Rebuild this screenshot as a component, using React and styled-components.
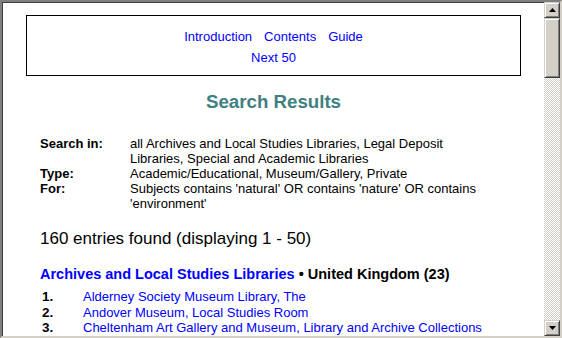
import React from "react";
import styled, { createGlobalStyle } from "styled-components";

const Global = createGlobalStyle`
  html, body { margin: 0; padding: 0; background: #fff; }
  body { font-family: "Liberation Sans", Arial, sans-serif; }
  * { box-sizing: border-box; }
`;

const Frame = styled.div`
  width: 562px;
  height: 338px;
  display: flex;
  border-top: 2px solid #808080;
  border-left: 2px solid #808080;
  border-right: 2px solid #d4d0c8;
  border-bottom: 2px solid #d4d0c8;
  box-shadow: inset 1px 1px 0 #404040;
  overflow: hidden;
  background: #fff;
`;

const Page = styled.div`
  flex: 1;
  overflow: hidden;
  padding: 13px 23px 0 24px;
  color: #000;
`;

const NavBox = styled.div`
  border: 1px solid #000;
  padding: 10px 0 7px;
  text-align: center;
  font-size: 13px;
  line-height: 21px;
`;

const NavRow = styled.div`
  display: flex;
  justify-content: center;
  gap: 12px;
`;

const Link = styled.a`
  color: #0000ff;
  text-decoration: none;
  cursor: pointer;
`;

const Title = styled.h1`
  margin: 15px 0 0;
  text-align: center;
  color: #408080;
  font-size: 18.7px;
  line-height: 22px;
  font-weight: bold;
`;

const Criteria = styled.div`
  margin: 23px 0 0 14px;
  display: grid;
  grid-template-columns: 90px 360px;
  font-size: 13px;
  line-height: 15px;
`;

const Label = styled.div`
  font-weight: bold;
`;

const Found = styled.div`
  margin: 18px 0 0 14px;
  font-size: 17px;
  line-height: 19px;
`;

const Section = styled.div`
  margin: 18px 0 0 14px;
  font-size: 14.5px;
  line-height: 17px;
  font-weight: bold;
`;

const SectionLink = styled(Link)`
  font-weight: bold;
`;

const List = styled.div`
  margin: 6px 0 0 16px;
  display: grid;
  grid-template-columns: 41px auto;
  font-size: 13px;
  line-height: 15.5px;
`;

const Num = styled.div`
  font-weight: bold;
  font-size: 13.5px;
`;

const Scrollbar = styled.div`
  width: 16px;
  display: flex;
  flex-direction: column;
  background-color: #fff;
  background-image: repeating-conic-gradient(#d4d0c8 0 25%, #fff 0 50%);
  background-size: 2px 2px;
`;

const Btn = styled.div`
  width: 16px;
  height: ${(p) => p.$h}px;
  flex: none;
  background: #d4d0c8;
  border-top: 1px solid #d4d0c8;
  border-left: 1px solid #d4d0c8;
  border-right: 1px solid #404040;
  border-bottom: 1px solid #404040;
  box-shadow: inset 1px 1px 0 #fff, inset -1px -1px 0 #808080;
  display: flex;
  align-items: center;
  justify-content: center;
`;

const Track = styled.div`
  flex: 1;
`;

const Arrow = ({ down }) => (
  <svg width="7" height="4" viewBox="0 0 7 4">
    <path d={down ? "M0 0h7L3.5 4z" : "M3.5 0L7 4H0z"} fill="#000" />
  </svg>
);

const items = [
  "Alderney Society Museum Library, The",
  "Andover Museum, Local Studies Room",
  "Cheltenham Art Gallery and Museum, Library and Archive Collections",
];

export default function App() {
  return (
    <>
      <Global />
      <Frame>
        <Page>
          <NavBox>
            <NavRow>
              <Link>Introduction</Link>
              <Link>Contents</Link>
              <Link>Guide</Link>
            </NavRow>
            <NavRow>
              <Link>Next 50</Link>
            </NavRow>
          </NavBox>
          <Title>Search Results</Title>
          <Criteria>
            <Label>Search in:</Label>
            <div>
              all Archives and Local Studies Libraries, Legal Deposit Libraries,
              Special and Academic Libraries
            </div>
            <Label>Type:</Label>
            <div>Academic/Educational, Museum/Gallery, Private</div>
            <Label>For:</Label>
            <div>
              Subjects contains 'natural' OR contains 'nature' OR contains
              'environment'
            </div>
          </Criteria>
          <Found>160 entries found (displaying 1 - 50)</Found>
          <Section>
            <SectionLink>Archives and Local Studies Libraries</SectionLink> •
            United Kingdom (23)
          </Section>
          <List>
            {items.map((t, i) => (
              <React.Fragment key={t}>
                <Num>{i + 1}.</Num>
                <Link>{t}</Link>
              </React.Fragment>
            ))}
          </List>
        </Page>
        <Scrollbar>
          <Btn $h={16}>
            <Arrow />
          </Btn>
          <Btn $h={60} />
          <Track />
          <Btn $h={16}>
            <Arrow down />
          </Btn>
        </Scrollbar>
      </Frame>
    </>
  );
}
